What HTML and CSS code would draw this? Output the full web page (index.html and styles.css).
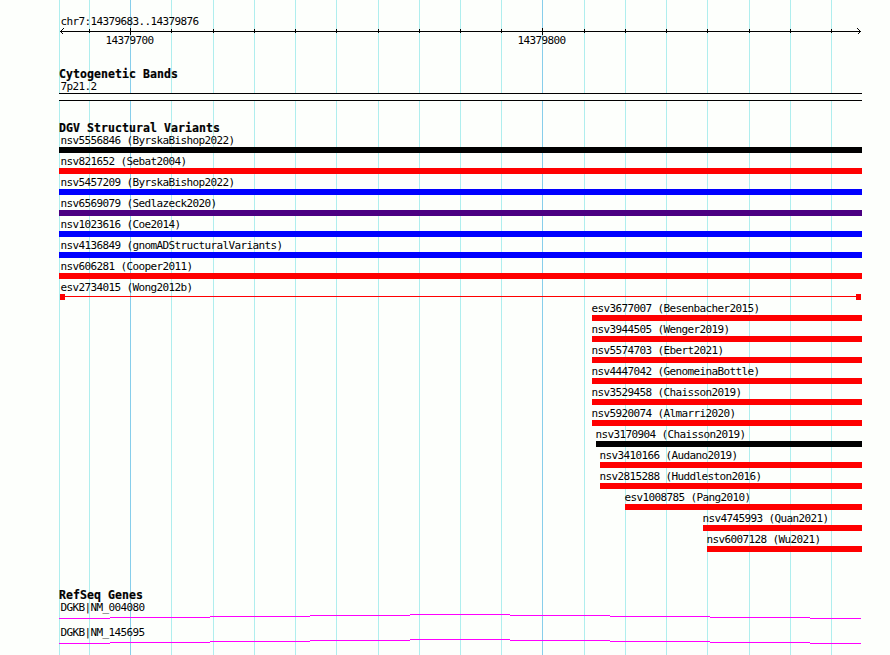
FILE: index.html
```
<!DOCTYPE html>
<html lang="en">
<head>
  <meta charset="UTF-8">
  <title>chr7:14379683..14379876</title>
  <meta name="viewport" content="width=device-width, initial-scale=1">
  <link rel="stylesheet" href="styles.css">
</head>
<body>

<div class="browser">
  <!-- Grid lines -->
  <svg class="grid" width="803" height="655" shape-rendering="crispEdges">
    <path class="minor" d="M.5 0V655M30.5 0V655M112.5 0V655M154.5 0V655M195.5 0V655M236.5 0V655M277.5 0V655M319.5 0V655M360.5 0V655M401.5 0V655M442.5 0V655M525.5 0V655M566.5 0V655M607.5 0V655M648.5 0V655M690.5 0V655M731.5 0V655M772.5 0V655"/>
    <path class="major" d="M71.5 0V655M483.5 0V655"/>
  </svg>

  <!-- Ruler -->
  <div class="ruler">
    <div class="label">chr7:14379683..14379876</div>
    <svg class="axis" width="803" height="7" shape-rendering="crispEdges">
      <path d="M1 3.5H802"/>
      <path d="M30.5 1V5M112.5 1V5M154.5 1V5M195.5 1V5M236.5 1V5M277.5 1V5M319.5 1V5M360.5 1V5M401.5 1V5M442.5 1V5M525.5 1V5M566.5 1V5M607.5 1V5M648.5 1V5M690.5 1V5M731.5 1V5M772.5 1V5"/>
      <path d="M71.5 0V7M483.5 0V7"/>
      <path d="M4.5 .5L1.5 3.5L4.5 6.5M798.5 .5L801.5 3.5L798.5 6.5"/>
    </svg>
    <div class="scale"><span>14379700</span><span>14379800</span></div>
  </div>

  <!-- Cytogenetic Bands -->
  <div class="track cyto">
    <h2>Cytogenetic Bands</h2>
    <div class="label">7p21.2</div>
    <div class="band"></div>
  </div>

  <!-- DGV Structural Variants -->
  <div class="track variants">
    <h2>DGV Structural Variants</h2>
    <div class="variant full"><div class="label">nsv5556846 (ByrskaBishop2022)</div><div class="bar black"></div></div>
    <div class="variant full"><div class="label">nsv821652 (Sebat2004)</div><div class="bar red"></div></div>
    <div class="variant full"><div class="label">nsv5457209 (ByrskaBishop2022)</div><div class="bar blue"></div></div>
    <div class="variant full"><div class="label">nsv6569079 (Sedlazeck2020)</div><div class="bar purple"></div></div>
    <div class="variant full"><div class="label">nsv1023616 (Coe2014)</div><div class="bar blue"></div></div>
    <div class="variant full"><div class="label">nsv4136849 (gnomADStructuralVariants)</div><div class="bar blue"></div></div>
    <div class="variant full"><div class="label">nsv606281 (Cooper2011)</div><div class="bar red"></div></div>
    <div class="variant full"><div class="label">esv2734015 (Wong2012b)</div><div class="span"><i></i><b></b><i></i></div></div>
    <div class="variant" style="width:270px"><div class="label">esv3677007 (Besenbacher2015)</div><div class="bar red"></div></div>
    <div class="variant" style="width:270px"><div class="label">nsv3944505 (Wenger2019)</div><div class="bar red"></div></div>
    <div class="variant" style="width:270px"><div class="label">nsv5574703 (Ebert2021)</div><div class="bar red"></div></div>
    <div class="variant" style="width:270px"><div class="label">nsv4447042 (GenomeinaBottle)</div><div class="bar red"></div></div>
    <div class="variant" style="width:270px"><div class="label">nsv3529458 (Chaisson2019)</div><div class="bar red"></div></div>
    <div class="variant" style="width:270px"><div class="label">nsv5920074 (Almarri2020)</div><div class="bar red"></div></div>
    <div class="variant" style="width:266px"><div class="label">nsv3170904 (Chaisson2019)</div><div class="bar black"></div></div>
    <div class="variant" style="width:262px"><div class="label">nsv3410166 (Audano2019)</div><div class="bar red"></div></div>
    <div class="variant" style="width:262px"><div class="label">nsv2815288 (Huddleston2016)</div><div class="bar red"></div></div>
    <div class="variant" style="width:237px"><div class="label">esv1008785 (Pang2010)</div><div class="bar red"></div></div>
    <div class="variant" style="width:159px"><div class="label">nsv4745993 (Quan2021)</div><div class="bar red"></div></div>
    <div class="variant" style="width:155px"><div class="label">nsv6007128 (Wu2021)</div><div class="bar red"></div></div>
  </div>

  <!-- RefSeq Genes -->
  <div class="track genes">
    <h2>RefSeq Genes</h2>
    <div class="gene">
      <div class="label">DGKB|NM_004080</div>
      <svg width="803" height="5" shape-rendering="crispEdges">
        <path d="M0 4.5H51M51 3.5H151M151 2.5H251M251 1.5H351M351 .5H451M451 1.5H551M551 2.5H651M651 3.5H751M751 4.5H802"/>
      </svg>
    </div>
    <div class="gene">
      <div class="label">DGKB|NM_145695</div>
      <svg width="803" height="5" shape-rendering="crispEdges">
        <path d="M0 4.5H51M51 3.5H151M151 2.5H251M251 1.5H351M351 .5H451M451 1.5H551M551 2.5H651M651 3.5H751M751 4.5H802"/>
      </svg>
    </div>
  </div>
</div>

</body>
</html>
```
FILE: styles.css
```
body {
  margin: 0;
  background: #fdfffc;
  color: #000;
  font: 11px/13px "DejaVu Sans Mono", monospace;
}
.browser {
  position: relative;
  box-sizing: border-box;
  width: 890px; height: 655px;
  padding: 15px 28px 0 59px;
  overflow: hidden;
}
svg { display: block; fill: none; }
.grid {
  position: absolute;
  top: 0; left: 59px;
  z-index: -1;
}
.minor { stroke: #afeeee; }
.major { stroke: #87ceeb; }
.label, .scale {
  height: 13px;
  padding-left: 1.4px;
  letter-spacing: -0.622px;
  white-space: nowrap;
}
h2 {
  margin: 0;
  height: 12px;
  font-size: 11.5px;
  line-height: 13px;
  font-weight: bold;
  letter-spacing: 0.077px;
  -webkit-text-stroke: 0.2px #000;
}

/* ruler */
.ruler { height: 53px; }
.axis { stroke: #000; }
.scale {
  display: flex;
  gap: 364px;
  padding-left: 46.4px;
  margin-top: -1px;
}
.scale span { width: 48px; }

/* cytogenetic bands */
.cyto { height: 54px; }
.band {
  box-sizing: border-box;
  height: 8px;
  border: solid #000;
  border-width: 1px 0;
  background: #fdfffc;
}

/* structural variants */
.variants { height: 467px; }
.variant {
  height: 21px;
  margin-left: auto;
}
.variant .label { padding: 0; margin-left: -0.6px; }
.full { width: 803px; }
.full .label { margin-left: 1.4px; }
.bar { height: 6px; }
.black { background: #000; }
.red { background: #f00; }
.blue { background: #00f; }
.purple { background: #4b0082; }
.span {
  display: flex;
  padding: 0 1px;
}
.span i {
  width: 5px; height: 6px;
  background: #f00;
}
.span b {
  flex: 1;
  height: 1px;
  margin-top: 2px;
  background: #f00;
}

/* genes */
.gene { height: 25px; }
.gene svg { stroke: #f0f; }
```
